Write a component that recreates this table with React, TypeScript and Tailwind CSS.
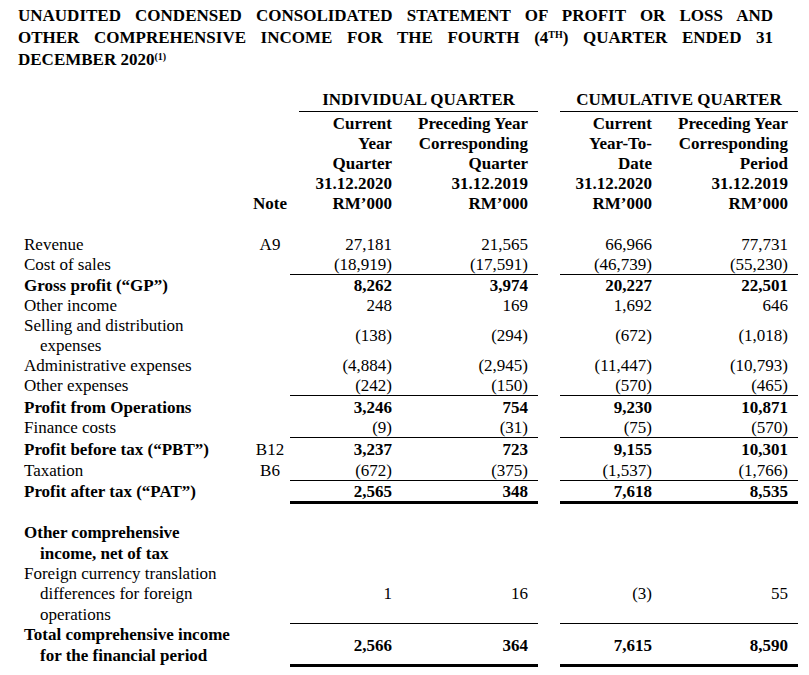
import React from 'react';

type Line = 'none' | 'thin' | 'thick';

interface RowDef {
  label: string[];
  note?: string;
  values?: [string, string, string, string];
  bold?: boolean;
  line?: Line;
  h: string;
}

const cols = 'grid grid-cols-[226px_40px_112px_136px_22px_102px_136px]';

const rowsTop: RowDef[] = [
  { label: ['Revenue'], note: 'A9', values: ['27,181', '21,565', '66,966', '77,731'], h: 'h-[20.5px]' },
  { label: ['Cost of sales'], values: ['(18,919)', '(17,591)', '(46,739)', '(55,230)'], line: 'thin', h: 'h-[20.5px]' },
  { label: ['Gross profit (“GP”)'], values: ['8,262', '3,974', '20,227', '22,501'], bold: true, h: 'h-[20px]' },
  { label: ['Other income'], values: ['248', '169', '1,692', '646'], h: 'h-[20px]' },
  { label: ['Selling and distribution', 'expenses'], values: ['(138)', '(294)', '(672)', '(1,018)'], h: 'h-[40px]' },
  { label: ['Administrative expenses'], values: ['(4,884)', '(2,945)', '(11,447)', '(10,793)'], h: 'h-[20px]' },
  { label: ['Other expenses'], values: ['(242)', '(150)', '(570)', '(465)'], line: 'thin', h: 'h-[21px]' },
  { label: ['Profit from Operations'], values: ['3,246', '754', '9,230', '10,871'], bold: true, h: 'h-[21px]' },
  { label: ['Finance costs'], values: ['(9)', '(31)', '(75)', '(570)'], line: 'thin', h: 'h-[21px]' },
  { label: ['Profit before tax (“PBT”)'], note: 'B12', values: ['3,237', '723', '9,155', '10,301'], bold: true, h: 'h-[21.5px]' },
  { label: ['Taxation'], note: 'B6', values: ['(672)', '(375)', '(1,537)', '(1,766)'], line: 'thin', h: 'h-[21.5px]' },
  { label: ['Profit after tax (“PAT”)'], values: ['2,565', '348', '7,618', '8,535'], bold: true, line: 'thick', h: 'h-[23px]' },
];

const rowsBottom: RowDef[] = [
  { label: ['Other comprehensive', 'income, net of tax'], bold: true, h: 'h-[41px]' },
  {
    label: ['Foreign currency translation', 'differences for foreign', 'operations'],
    values: ['1', '16', '(3)', '55'],
    line: 'thin',
    h: 'h-[61.5px]',
  },
  {
    label: ['Total comprehensive income', 'for the financial period'],
    values: ['2,566', '364', '7,615', '8,590'],
    bold: true,
    line: 'thick',
    h: 'h-[43.5px]',
  },
];

const Row: React.FC<{ row: RowDef }> = ({ row }) => {
  const border =
    row.line === 'thick' ? 'border-b-[3px]' : row.line === 'thin' ? 'border-b' : '';
  const cell = `flex flex-col justify-center pt-[3.5px] leading-[20.5px] ${row.h} ${border}`;
  const blank = `${cell} border-transparent`;
  const num = `${cell} border-black items-end pr-[10px] ${row.bold ? 'font-bold' : ''}`;

  return (
    <div className={cols}>
      <div className={`${blank} ${row.bold ? 'font-bold' : ''}`}>
        {row.label.map((l, i) => (
          <div key={i} className={i > 0 ? 'pl-4' : ''}>
            {l}
          </div>
        ))}
      </div>
      <div className={`${blank} items-center`}>{row.note}</div>
      {row.values ? (
        <>
          <div className={num}>{row.values[0]}</div>
          <div className={num}>{row.values[1]}</div>
          <div className={blank}></div>
          <div className={num}>{row.values[2]}</div>
          <div className={num}>{row.values[3]}</div>
        </>
      ) : null}
    </div>
  );
};

const HeadCol: React.FC<{ lines: string[] }> = ({ lines }) => (
  <div className="text-right pr-[10px]">
    {lines.map((l) => (
      <div key={l}>{l}</div>
    ))}
  </div>
);

export default function App() {
  return (
    <div
      className="w-[809px] min-h-[675px] bg-white text-black text-[17px]"
      style={{ fontFamily: '"Liberation Serif", "Times New Roman", serif' }}
    >
      {/* Title */}
      <div className="pt-[5px] pl-[18px] w-[773px] font-bold leading-[22px]">
        <div className="text-justify [text-align-last:justify]">
          UNAUDITED CONDENSED CONSOLIDATED STATEMENT OF PROFIT OR LOSS AND
        </div>
        <div className="text-justify [text-align-last:justify]">
          OTHER COMPREHENSIVE INCOME FOR THE FOURTH (4<sup className="text-[10px]">TH</sup>) QUARTER ENDED 31
        </div>
        <div>
          DECEMBER 2020<sup className="text-[10px]">(1)</sup>
        </div>
      </div>

      <div className="ml-[24px] mt-[19px]">
        {/* Column headings */}
        <div className={`${cols} font-bold`}>
          <div className="col-start-3 col-span-2 ml-[9px] h-[22px] leading-[20.5px] text-center border-b border-black">
            INDIVIDUAL QUARTER
          </div>
          <div className="col-start-6 col-span-2 h-[22px] leading-[20.5px] text-center border-b border-black">
            CUMULATIVE QUARTER
          </div>
        </div>
        <div className={`${cols} font-bold pt-[2.25px] leading-[20px]`}>
          <div></div>
          <div className="flex items-end justify-center">Note</div>
          <HeadCol lines={['Current', 'Year', 'Quarter', '31.12.2020', 'RM’000']} />
          <HeadCol lines={['Preceding Year', 'Corresponding', 'Quarter', '31.12.2019', 'RM’000']} />
          <div></div>
          <HeadCol lines={['Current', 'Year-To-', 'Date', '31.12.2020', 'RM’000']} />
          <HeadCol lines={['Preceding Year', 'Corresponding', 'Period', '31.12.2019', 'RM’000']} />
        </div>

        {/* Profit or loss */}
        <div className="mt-[19.25px]">
          {rowsTop.map((r) => (
            <Row key={r.label[0]} row={r} />
          ))}
        </div>

        {/* Other comprehensive income */}
        <div className="mt-[17.75px]">
          {rowsBottom.map((r) => (
            <Row key={r.label[0]} row={r} />
          ))}
        </div>
      </div>
    </div>
  );
}
